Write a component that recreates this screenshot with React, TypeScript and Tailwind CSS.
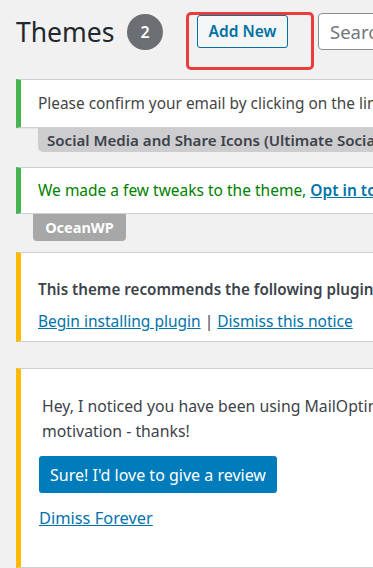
import React from "react";

export default function App() {
  const font = { fontFamily: '"Noto Sans", "Open Sans", sans-serif' };
  return (
    <div
      className="w-[373px] h-[568px] overflow-hidden bg-[#f1f1f1] text-[#444]"
      style={font}
    >
      <div className="pl-[16px]">
        {/* Header */}
        <div className="flex items-start h-[79px]">
          <h1 className="mt-[12px] w-[97px] shrink-0 h-[40px] leading-[40px] text-[26.5px] font-normal text-[#23282d] whitespace-nowrap">
            Themes
          </h1>
          <div className="ml-[14px] mt-[14px] w-[36px] h-[36px] shrink-0 rounded-full bg-[#6b6e72] text-white text-[16px] font-semibold flex items-center justify-center">
            2
          </div>
          <div className="ml-[23px] mt-[12px] w-[128px] h-[58px] shrink-0 border-[3px] border-[#ec3b3b] rounded-[5px] pl-[8px]">
            <button className="h-[33px] w-[91px] border border-[#0071a1] rounded-[3px] bg-[#f3f5f6] text-[#0071a1] text-[15.5px] font-semibold leading-none">
              Add New
            </button>
          </div>
          <div className="ml-[4px] mt-[13px] w-[120px] h-[37px] shrink-0 border border-[#8c8f94] rounded-[4px] bg-white pl-[11px] flex items-center text-[18.5px] text-[#72777c]">
            Search
          </div>
        </div>

        {/* Notice 1 */}
        <div className="w-[400px] h-[49px] bg-white border border-[#ccd0d4] border-l-[5px] border-l-[#46b450] shadow-[0_1px_1px_rgba(0,0,0,0.04)] pl-[17px] flex items-center text-[15.4px] whitespace-nowrap overflow-hidden">
          Please confirm your email by clicking on the link we sent
        </div>
        <div className="ml-[22px] w-[400px] h-[24px] bg-[#cdcdcf] rounded-bl-[5px] pl-[9px] flex items-center text-[15.1px] font-semibold text-[#3c434a] whitespace-nowrap overflow-hidden">
          Social Media and Share Icons (Ultimate Social Media)
        </div>

        {/* Notice 2 */}
        <div className="mt-[15px] w-[400px] h-[47px] bg-white border border-[#ccd0d4] border-l-[5px] border-l-[#46b450] pl-[17px] flex items-center text-[15.5px] whitespace-nowrap overflow-hidden text-[#008000]">
          We made a few tweaks to the theme,&nbsp;
          <a className="text-[#0073aa] underline font-semibold">Opt in to receive updates</a>
        </div>
        <div className="ml-[17px] w-[93px] h-[27px] bg-[#a7a7a7] rounded-b-[4px] flex items-center justify-center text-[14.5px] font-bold text-white">
          OceanWP
        </div>

        {/* Notice 3 */}
        <div className="mt-[11px] w-[400px] h-[90px] bg-white border border-[#ccd0d4] border-l-[5px] border-l-[#ffb900] pl-[17px] pt-[24px] whitespace-nowrap overflow-hidden">
          <p className="font-semibold leading-[25px] text-[15.2px] text-[#3c434a]">
            This theme recommends the following plugin: MailOptin.
          </p>
          <p className="mt-[7px] leading-[25px] text-[15.5px]">
            <a className="text-[#0073aa] underline">Begin installing plugin</a>
            <span className="text-[#3c434a]"> | </span>
            <a className="text-[#0073aa] underline">Dismiss this notice</a>
          </p>
        </div>

        {/* Notice 4 */}
        <div className="mt-[26px] w-[400px] h-[200px] bg-white border border-[#ccd0d4] border-l-[5px] border-l-[#ffb900] pl-[21px] pt-[25px] text-[15.8px] overflow-hidden">
          <p className="leading-[25px] text-[#3c434a] whitespace-nowrap">
            Hey, I noticed you have been using MailOptin for some time
          </p>
          <p className="leading-[25px] text-[#3c434a]">motivation - thanks!</p>
          <button className="mt-[12px] -ml-[3px] w-[238px] h-[37px] bg-[#007cba] rounded-[3px] text-white text-[16px] leading-none">
            Sure! I'd love to give a review
          </button>
          <div className="mt-[13px] -ml-[3px]">
            <a className="text-[#0073aa] underline text-[16.4px]">Dimiss Forever</a>
          </div>
        </div>
      </div>
    </div>
  );
}
